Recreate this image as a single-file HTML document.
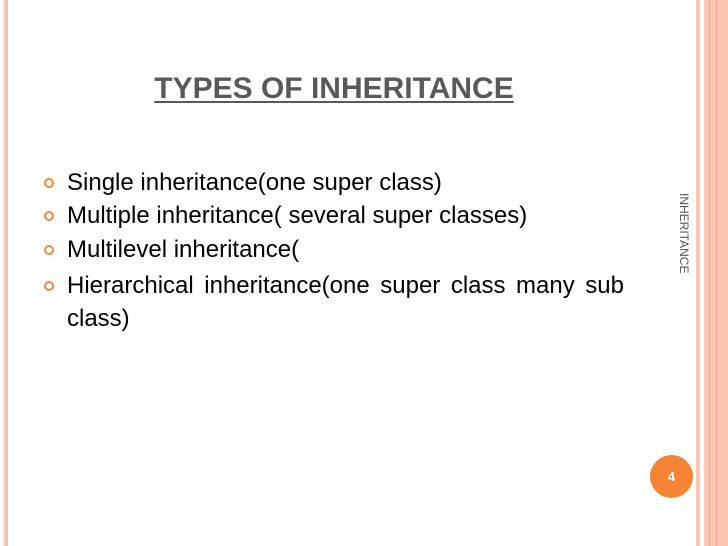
<html><head><style>
body{margin:0;width:728px;height:546px;position:relative;background:#fff;overflow:hidden;font-family:"Liberation Sans",sans-serif}
.s{position:absolute;top:0;height:546px}
h1{position:absolute;left:0;width:668px;top:72px;margin:0;text-align:center;font-size:30px;font-weight:bold;color:#595959;text-decoration:underline;text-decoration-thickness:2px;text-underline-offset:3px}
.li{position:absolute;left:67px;font-size:24px;color:#000;line-height:33px;width:557px}
.b{position:absolute;left:-23px;top:12px;width:6px;height:6px;border:2.5px solid #f08a3c;border-radius:50%}
</style></head><body>
<div class="s" style="left:3px;width:2px;background:#fcd9cc"></div>
<div class="s" style="left:5px;width:3px;background:#f9c1ad"></div>
<div class="s" style="left:696px;width:4px;background:#f9c6b3"></div>
<div class="s" style="left:704px;width:24px;background:#f9c6b3"></div>
<div class="s" style="left:709px;width:1px;background:#f0a58a"></div>
<div class="s" style="left:716px;width:1px;background:#f0a58a"></div>
<h1>TYPES OF INHERITANCE</h1>
<div class="li" style="top:166px"><span class="b"></span>Single inheritance(one super class)</div>
<div class="li" style="top:199px"><span class="b"></span>Multiple inheritance( several super classes)</div>
<div class="li" style="top:233px"><span class="b"></span>Multilevel inheritance(</div>
<div class="li" style="top:269px;text-align:justify;text-align-last:left"><span class="b"></span>Hierarchical inheritance(one super class many sub class)</div>
<div style="position:absolute;left:691px;top:193px;transform-origin:0 0;transform:rotate(90deg);font-size:12px;color:#555;white-space:nowrap">INHERITANCE</div>
<div style="position:absolute;left:650px;top:455px;width:43px;height:43px;border-radius:50%;background:#f58535;color:#fff;font-weight:bold;font-size:13px;text-align:center;line-height:43px">4</div>
</body></html>
